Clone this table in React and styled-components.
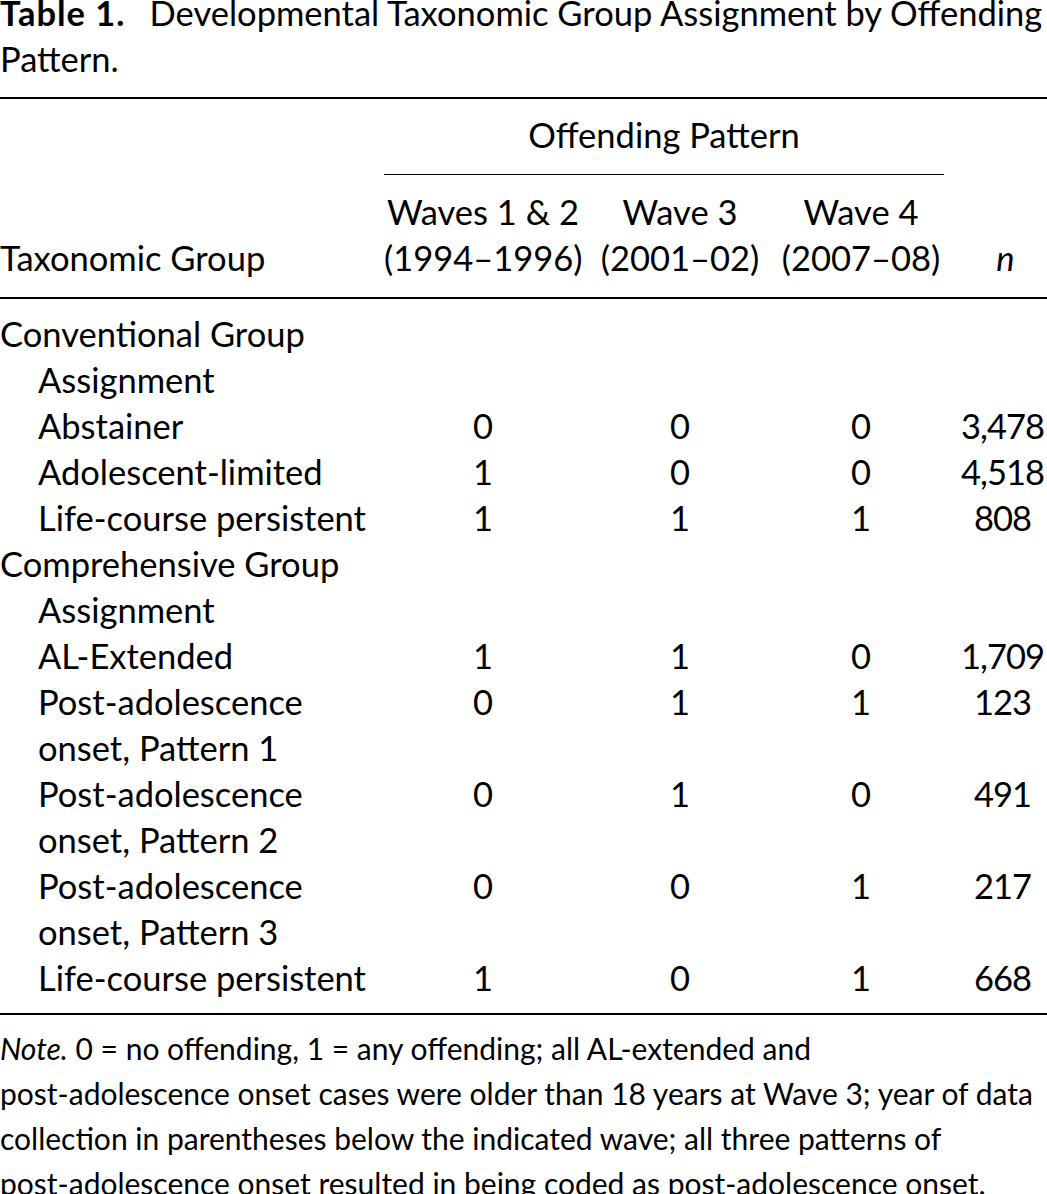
import React from "react";
import styled, { createGlobalStyle } from "styled-components";

const GlobalStyle = createGlobalStyle`
  html, body {
    margin: 0;
    padding: 0;
    background: #fff;
  }
  body {
    font-family: Lato, "Noto Sans", sans-serif;
    color: #000;
  }
`;

const Page = styled.div`
  width: 1047px;
  overflow: hidden;
`;

const Caption = styled.div`
  margin-top: -10px;
  font-size: 34.5px;
  line-height: 46px;
  white-space: nowrap;
  padding-bottom: 15px;
`;

const CaptionLabel = styled.b`
  font-weight: 700;
  letter-spacing: 1px;
  margin-right: 24px;
`;

const Table = styled.table`
  width: 1047px;
  table-layout: fixed;
  border-collapse: collapse;
  border-top: 2px solid #000;
  border-bottom: 2px solid #000;
  font-size: 34.5px;
  line-height: 46px;

  thead {
    border-bottom: 2px solid #000;
  }
`;

const Th = styled.th`
  font-weight: 400;
  padding: ${({ $pad }) => $pad || "0"};
  text-align: ${({ $align }) => $align || "center"};
  vertical-align: bottom;
  white-space: nowrap;
`;

const SpanTh = styled(Th)`
  border-bottom: 1.5px solid #000;
`;

const Row = styled.tr`
  &:first-child td {
    padding-top: 12px;
  }
  &:last-child td {
    padding-bottom: 12px;
  }
`;

const Label = styled.td`
  padding: 0 0 0 38px;
  text-indent: ${({ $group }) => ($group ? "-38px" : "0")};
  white-space: nowrap;
  vertical-align: top;
`;

const Cell = styled.td`
  padding: 0;
  text-align: center;
  vertical-align: top;
`;

const Count = styled(Cell)`
  padding-left: 14px;
  letter-spacing: -1px;
  white-space: nowrap;
`;

const Note = styled.div`
  font-size: 30px;
  line-height: 45px;
  padding-top: 11px;
  white-space: nowrap;

  em {
    font-style: italic;
  }
`;

const rows = [
  { label: ["Conventional Group", "Assignment"], group: true },
  { label: ["Abstainer"], vals: ["0", "0", "0", "3,478"] },
  { label: ["Adolescent-limited"], vals: ["1", "0", "0", "4,518"] },
  { label: ["Life-course persistent"], vals: ["1", "1", "1", "808"] },
  { label: ["Comprehensive Group", "Assignment"], group: true },
  { label: ["AL-Extended"], vals: ["1", "1", "0", "1,709"] },
  { label: ["Post-adolescence", "onset, Pattern 1"], vals: ["0", "1", "1", "123"] },
  { label: ["Post-adolescence", "onset, Pattern 2"], vals: ["0", "1", "0", "491"] },
  { label: ["Post-adolescence", "onset, Pattern 3"], vals: ["0", "0", "1", "217"] },
  { label: ["Life-course persistent"], vals: ["1", "0", "1", "668"] },
];

const App = () => (
  <Page>
    <GlobalStyle />
    <Caption>
      <CaptionLabel>Table 1.</CaptionLabel>Developmental Taxonomic Group Assignment by Offending
      <br />
      Pattern.
    </Caption>

    <Table>
      <colgroup>
        <col style={{ width: 384 }} />
        <col style={{ width: 198 }} />
        <col style={{ width: 196 }} />
        <col style={{ width: 166 }} />
        <col style={{ width: 103 }} />
      </colgroup>
      <thead>
        <tr>
          <Th $pad="13px 0 16px" />
          <SpanTh colSpan={3} $pad="13px 0 16px">Offending Pattern</SpanTh>
          <Th $pad="13px 0 16px" />
        </tr>
        <tr>
          <Th $align="left" $pad="14px 0 16px">Taxonomic Group</Th>
          <Th $pad="14px 0 16px">Waves 1 &amp; 2<br />(1994–1996)</Th>
          <Th $pad="14px 0 16px">Wave 3<br />(2001–02)</Th>
          <Th $pad="14px 0 16px">Wave 4<br />(2007–08)</Th>
          <Th $pad="14px 0 16px 20px"><i>n</i></Th>
        </tr>
      </thead>
      <tbody>
        {rows.map((r, i) => (
          <Row key={i}>
            <Label $group={r.group}>
              {r.label.map((l, j) => (
                <React.Fragment key={j}>
                  {j > 0 && <br />}
                  {l}
                </React.Fragment>
              ))}
            </Label>
            {r.vals ? (
              <>
                <Cell>{r.vals[0]}</Cell>
                <Cell>{r.vals[1]}</Cell>
                <Cell>{r.vals[2]}</Cell>
                <Count>{r.vals[3]}</Count>
              </>
            ) : (
              <>
                <Cell />
                <Cell />
                <Cell />
                <Count />
              </>
            )}
          </Row>
        ))}
      </tbody>
    </Table>

    <Note>
      <em>Note.</em> 0 = no offending, 1 = any offending; all AL-extended and
      <br />
      post-adolescence onset cases were older than 18 years at Wave 3; year of data
      <br />
      collection in parentheses below the indicated wave; all three patterns of
      <br />
      post-adolescence onset resulted in being coded as post-adolescence onset.
    </Note>
  </Page>
);

export default App;
